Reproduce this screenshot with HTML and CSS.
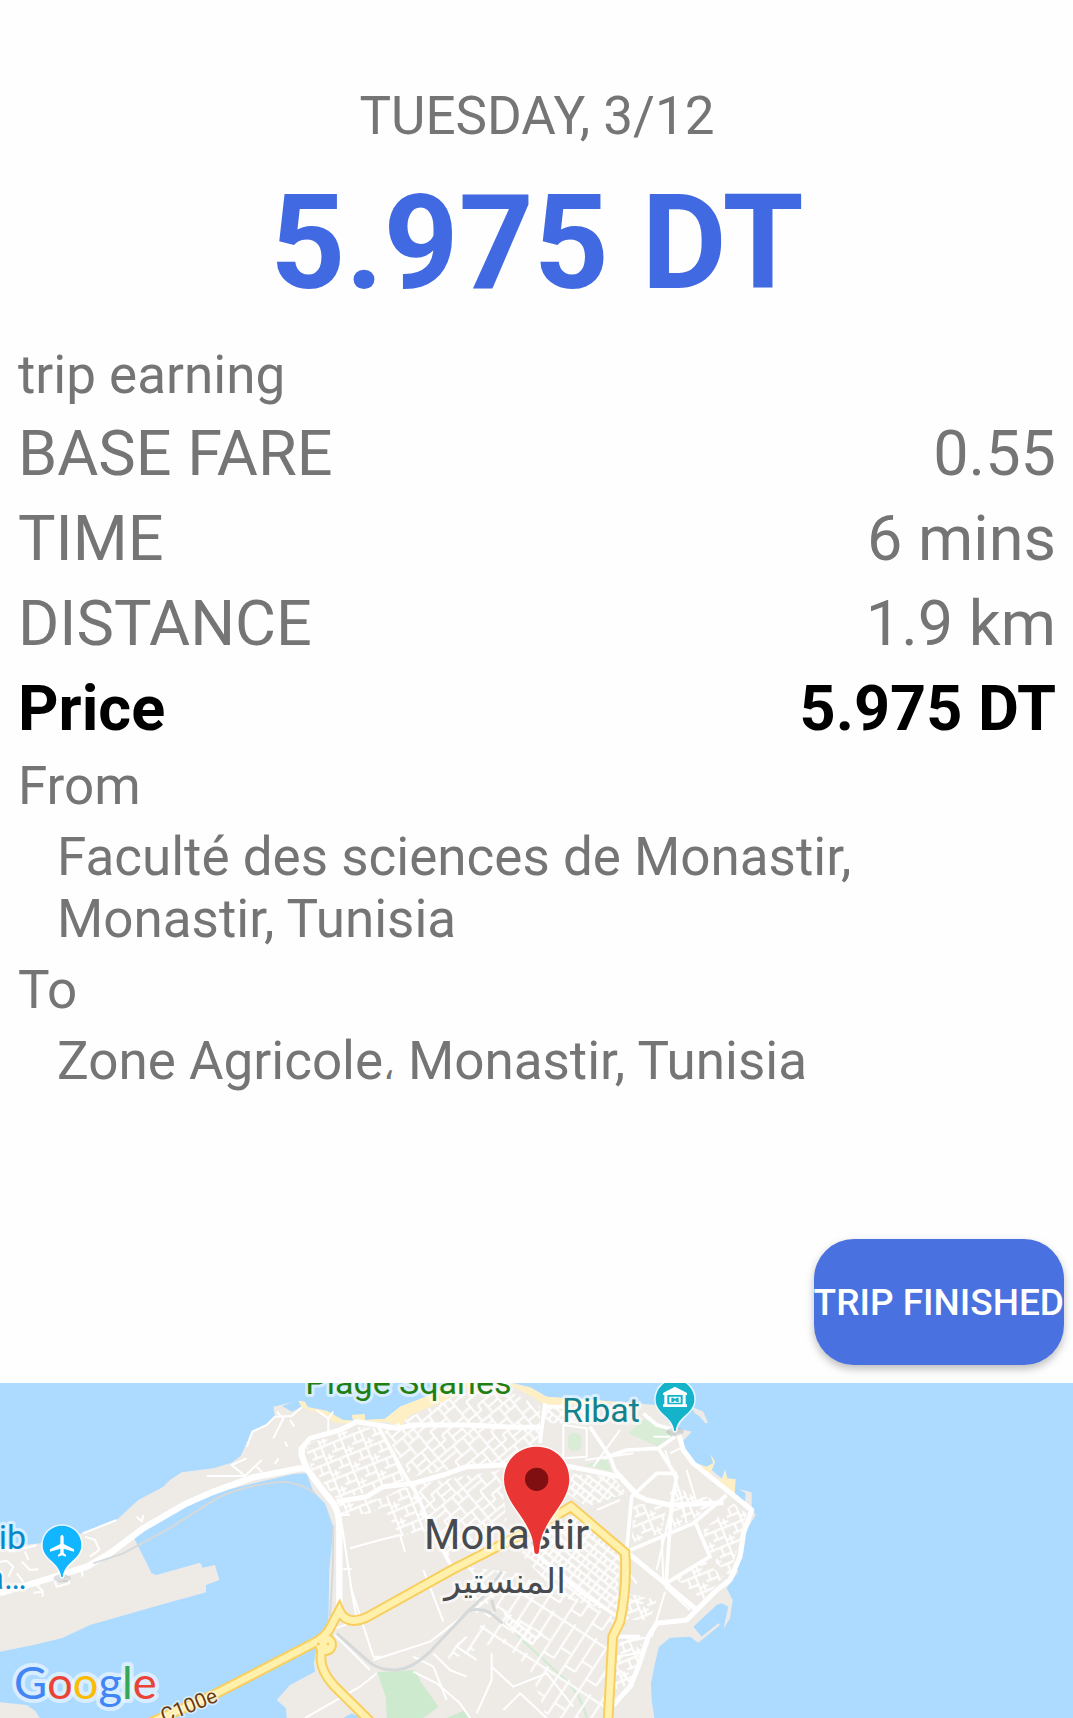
FILE: index.html
```html
<!DOCTYPE html>
<html lang="en">
<head>
<meta charset="utf-8">
<meta name="viewport" content="width=device-width, initial-scale=1">
<title>Trip details</title>
<link rel="stylesheet" href="styles.css">
</head>
<body>
<main class="trip">
  <header class="summary">
    <p class="date">TUESDAY, 3/12</p>
    <h1 class="total">5.975 DT</h1>
  </header>
  <h2 class="caption">trip earning</h2>
  <dl class="fares">
    <div class="fare"><dt>BASE FARE</dt><dd>0.55</dd></div>
    <div class="fare"><dt>TIME</dt><dd>6 mins</dd></div>
    <div class="fare"><dt>DISTANCE</dt><dd>1.9 km</dd></div>
    <div class="fare fare-price"><dt>Price</dt><dd>5.975 DT</dd></div>
  </dl>
  <dl class="route">
    <dt>From</dt>
    <dd>Faculté des sciences de Monastir, Monastir, Tunisia</dd>
    <dt>To</dt>
    <dd>Zone Agricole<span class="arabic-comma">،</span> Monastir, Tunisia</dd>
  </dl>
  <button class="finish" type="button">TRIP FINISHED</button>
</main>
<svg class="map" viewBox="0 39 3219 1005" role="img" aria-label="Map of Monastir">
  <defs>
    <path id="land" d="M0 530L100 522 190 512 245 490 350 450 415 390 490 350 510 330 545 307 640 295 695 278 722 258 740 220 757 185 800 165 825 140 820 110 880 95 846 108 875 125 905 112 905 90 920 110 970 120 1020 150 1060 152 1055 135 1095 133 1095 150 1155 146 1200 110 1290 75 1370 39H1540L1590 52 1640 80 1700 85 1780 90 1965 105 2000 150 2030 175 2075 185 2050 212 2052 235 2080 275 2120 290 2140 280 2132 255 2145 275 2135 300 2165 325 2175 300 2180 325 2205 332 2205 380 2235 395 2237 370 2217 357 2255 367 2255 415 2267 435 2240 480 2230 550 2207 590 2215 605 2180 655 2198 690 2190 745 2170 778 2185 710 2165 700 2150 705 2080 770 2105 800 2155 760 2160 765 2095 818 2070 800 2010 803 1977 830 1965 880 1953 940 1955 990 1963 1044H860L858 1015 830 990 870 945 945 905 942 880 950 830 985 765 988 600 1000 470 975 400 940 365 920 310 880 312 740 345 620 375 540 410 430 465 400 500 455 610 470 615 600 578 608 593 645 585 658 630 618 645V667L480 705 270 765 185 805 100 825 0 845Z"/>
    <clipPath id="on-land"><use href="#land"/></clipPath>
    <pattern id="blocks-a" width="64" height="52" patternUnits="userSpaceOnUse" patternTransform="rotate(-22)">
      <path class="lane" d="M0 4H64M0 30H38M38 4V52M14 4V30M52 30V52M38 42H64"/>
    </pattern>
    <pattern id="blocks-b" width="116" height="140" patternUnits="userSpaceOnUse" patternTransform="rotate(50)">
      <path class="lane" d="M0 4H116M4 0V140M31 4V46M4 46H74M44 46V110M4 25H31M74 4V90M74 30H116M98 30V70M74 70H116M4 84H44M22 84V140M44 110H116M64 110V140M92 90V140M74 90H92"/>
    </pattern>
    <pattern id="blocks-c" width="76" height="150" patternUnits="userSpaceOnUse" patternTransform="rotate(33)">
      <path class="lane" d="M4 0V150M40 0V120M4 10H76M40 82H76M4 120H40"/>
    </pattern>
    <pattern id="blocks-d" width="36" height="40" patternUnits="userSpaceOnUse" patternTransform="rotate(38)">
      <path class="lane" d="M0 4H36M4 0V40M20 4V24M4 24H36"/>
    </pattern>
  </defs>

  <rect class="water" y="39" width="3219" height="1005"/>
  <use class="ground" href="#land"/>
  <path class="ground" d="M0 997L80 1005 105 1022 120 1044H0ZM2075 110L2110 125 2124 158 2116 160 2100 140 2084 130Z"/>
  <path class="water" d="M1030 1044L1055 1030 1085 1044Z"/>

  <g class="sand">
    <path d="M895 92L915 95 925 113 980 122 1030 150 1060 152 1055 135 1095 133 1095 150 1155 146 1200 110 1290 75 1370 39H1420L1330 95 1230 135 1200 170 1160 155 1080 160 1005 158 970 135 905 112Z"/>
    <path d="M1520 39L1590 52 1640 80 1700 85 1780 90 1965 105 1850 98 1640 108 1600 82Z"/>
    <path d="M2085 285L2120 290 2140 280 2132 253 2145 275 2130 312ZM2155 328L2172 325 2175 297 2182 325 2207 328 2203 382Z"/>
  </g>
  <g class="park">
    <path d="M1132 907L1245 900 1262 935 1316 1010 1270 1044H1160L1158 985ZM1340 1044L1395 1020 1410 1044Z"/>
    <path class="park-pale" d="M1885 190L1930 148 1985 168 2025 205 1978 232ZM1755 285L1820 265 1836 305ZM1795 392L1850 375V382Z"/>
    <rect class="park-pale" x="1704" y="188" width="40" height="55" rx="19"/>
  </g>
  <path class="stream" d="M1550 795L1680 915Q1745 970 1760 1044"/>

  <g clip-path="url(#on-land)">
    <path fill="url(#blocks-a)" d="M915 225L1070 170 1135 175 1220 330 1110 365 1010 388 935 300ZM1015 400L1150 385 1210 350 1240 360 1290 480 1200 500 1150 410 1110 430 1015 440Z"/>
    <path fill="url(#blocks-b)" d="M1150 180L1380 70 1520 60 1620 110 1620 270 1400 290 1230 320ZM1240 345L1500 300 1520 450 1340 560ZM1400 590L1560 610 1420 740Z"/>
    <path fill="url(#blocks-d)" d="M1640 110L1760 110 1780 160 1630 160ZM1560 550L1730 430 1860 560 1850 730 1680 680ZM1510 720L1630 790 1600 820 1520 780ZM1690 310L1840 320 1880 370 1760 410 1700 370Z"/>
    <path fill="url(#blocks-c)" d="M1500 600L1660 650 1840 740 1820 1044H1640L1590 900 1500 810 1350 870 1330 850 1440 770Z"/>
    <path fill="url(#blocks-a)" d="M1900 400L2000 410 1985 490 1895 520ZM1880 670L1970 690 1950 750 1870 750ZM1860 800L1930 800 1900 940 1840 960ZM2010 350L2150 390 2080 450 2010 480ZM2110 480L2200 400 2240 430 2190 620 2120 550ZM2020 620L2110 570 2170 620 2110 690Z"/>
  </g>

  <g class="lane">
    <path d="M620 318H735L695 285 740 265M735 318L785 270M770 290L790 310M740 230L757 185 800 165 825 140 875 138 905 112M830 125L850 145 820 205M870 150L883 170M950 120L985 145 1000 125M985 145L985 185M855 215L862 230M835 265L825 282"/>
    <path d="M0 530L40 545 60 530 75 535 110 525M0 575L20 572 40 590 25 620M65 575L90 600 115 598M75 545L85 570M50 610L70 635M100 668L128 665V680M110 645L130 665M248 490L350 450M255 500L285 510 298 540 270 560M410 440L425 455 430 435M245 600L248 620"/>
    <path d="M1020 435H1050M1025 460L1055 660 1120 860 1140 860M1050 535L1140 510 1200 495 1215 545M1030 597H1055M1050 640L1070 745M1005 775L1050 760M1120 870L1290 815 1400 730 1450 670M915 1044L1080 950 1130 910M1240 905L1310 940 1380 1000 1410 1044M1475 850V930L1430 1030M1300 850L1350 900 1400 920M1475 890L1540 950 1640 910 1720 1010M1270 600L1330 755M1240 860L1300 890 1340 990M1400 800L1370 830 1430 870M1510 1020L1560 970 1640 1044M1005 795L1110 900"/>
    <path d="M1690 165L1760 175V260L1690 265ZM1755 270L1900 250M1780 290L1860 180M1995 240L2040 370 2060 460M2010 250L2050 230M1985 490L1990 640M2060 300L2090 400M2010 430L1970 600M1995 665L1955 800M1880 600L1910 640M1850 680L1930 700M1995 650L2070 720M1860 820L1950 800M1850 860L1935 845M1860 900L1900 950M2010 200L1960 200M1780 470L1830 520M1790 420L1860 390"/>
    <path d="M165 633L205 625 208 640 170 650Z"/>
  </g>

  <g class="street">
    <path d="M1135 170L1220 325 1250 370 1295 480 1355 590M1635 100L1620 220M1635 110H1690M1770 170L1830 260 1845 300 1910 370M1810 265L1880 240 1975 235 2025 200M1975 235L2030 320 2015 400 1998 640M2030 310L1970 310 1895 380 1880 540M1880 545L2080 460 2180 375M1998 640L2130 560 2085 455M1600 545L1740 665 1800 705 1850 738M1855 800L1920 800M1930 130L1970 165 2025 180"/>
    <path class="wide" d="M1010 395L1100 380 1150 350 1240 340 1330 315 1400 290 1510 285H1600L1710 290 1860 320 1910 375 1940 390 2010 405 2170 398M905 235L930 205 1020 180 1070 155 1100 160 1190 175 1240 165H1400L1550 172H1620M2035 190L2050 240 2080 280 2180 360 2255 420 2230 490 2220 560 2190 630 2150 660 2060 750 1970 760 1945 800 1915 890 1890 950 1840 1005M1885 550L1995 640 2090 720"/>
    <path class="main-road" d="M0 670L160 622 260 590 330 550 430 475 560 400 640 365 760 322 900 295 920 295 905 255V230M920 295L960 350 1000 400Q1018 430 1018 470V720"/>
  </g>
  <g class="rail">
    <path d="M280 580L370 550 500 480 650 385Q730 345 850 335 905 340 945 370M1000 465L998 600 990 740"/>
    <path class="rail-wide" d="M1010 790L1110 878Q1140 902 1190 900 1240 895 1290 845L1400 728 1450 680 1505 605M1410 722Q1440 712 1470 728L1508 760M1475 690L1485 725"/>
  </g>

  <g class="highway-edge">
    <path id="highway" d="M440 1063L640 975 940 820Q980 800 995 765L1018 722Q1030 750 1060 752 1080 752 1100 742L1355 600 1620 465 1713 410 1875 548Q1882 650 1860 755L1838 800 1824 1054"/>
    <path id="exit" d="M965 822L963 870Q965 905 1000 945L1040 985 1110 1054"/>
    <circle cx="977" cy="824" r="18"/>
  </g>
  <g class="highway-fill">
    <use href="#highway"/><use href="#exit"/><circle cx="977" cy="824" r="18"/>
  </g>
  <path class="island" d="M951 822H959M980 822H987"/>

  <g class="label">
    <text class="beach-label" x="916" y="73">Plage Sqanes</text>
    <text class="museum-label" x="1686" y="156">Ribat</text>
    <text class="airport-label" x="78" y="537">ib</text>
    <text class="airport-label" x="80" y="656">a…</text>
    <text class="city-label" x="1520" y="538">Monastir</text>
    <text class="arabic-label" x="1515" y="668" lang="ar">المنستير</text>
    <text class="road-label" transform="translate(492 1060) rotate(-22)">C100e</text>
    <text class="logo" x="42" y="987"><tspan class="blue">G</tspan><tspan class="red">o</tspan><tspan class="yellow">o</tspan><tspan class="blue">g</tspan><tspan class="green">l</tspan><tspan class="red">e</tspan></text>
  </g>

  <ellipse class="pin-shadow" cx="186" cy="625" rx="26" ry="12"/>
  <path class="pin airport" d="M186 467A58 58 0 0 0 128 525C128 570 177 572 184 621H188C195 572 244 570 244 525A58 58 0 0 0 186 467Z"/>
  <path class="glyph" d="M186 495Q191 495 191 504V522L222 538V545L191 536V549L198 555V560L186 556 174 560V555L181 549V536L150 545V538L181 522V504Q181 495 186 495Z"/>

  <ellipse class="pin-shadow" cx="2025" cy="185" rx="26" ry="12"/>
  <path class="pin museum" d="M2025 30A58 58 0 0 0 1967 88C1967 133 2016 135 2023 183H2027C2034 135 2083 133 2083 88A58 58 0 0 0 2025 30Z"/>
  <path class="glyph" fill-rule="evenodd" d="M2025 50L2061 69V75H2057V103H2061V111H1989V103H1993V75H1989V69ZM2002 75V103H2048V75ZM2008 80H2042V98H2008ZM2014 83V96H2020L2025 91 2030 96H2036V83H2030L2025 87 2020 83Z"/>

  <path class="pin destination" d="M1610 230C1552 230 1512 275 1512 328C1512 362 1530 393 1556 429C1588 475 1600 501 1603 545Q1603 552 1610 552 1617 552 1617 545C1620 501 1632 475 1664 429C1690 393 1708 362 1708 328C1708 275 1668 230 1610 230Z"/>
  <circle class="pin-dot" cx="1610" cy="328" r="35"/>
</svg>
</body>
</html>
```
FILE: styles.css
```css
* {
  box-sizing: border-box;
}

body {
  margin: 0;
  min-height: 100vh;
  display: flex;
  flex-direction: column;
  background: #fefefe;
  color: #757575;
  font: 53px/62px Roboto, "DejaVu Sans", sans-serif;
}

p, h1, h2, dl, dd {
  margin: 0;
}

.trip {
  flex: 1;
  display: flex;
  flex-direction: column;
  padding: 85px 17px 18px 18px;
}

.summary {
  display: flex;
  flex-direction: column;
  gap: 19px;
  margin-bottom: 24px;
  text-align: center;
}

.total {
  font-size: 131px;
  line-height: 154px;
  font-weight: 700;
  color: #4169e1;
}

.caption {
  font-size: 53px;
  font-weight: 400;
}

.fares {
  display: grid;
  gap: 11px;
  margin: 11px 0 9px;
  font-size: 63px;
  line-height: 74px;
}

.fare {
  display: flex;
  justify-content: space-between;
}

.fare-price {
  color: #000;
  font-weight: 700;
}

.route {
  display: grid;
  gap: 9px;
}

.route dd {
  padding: 0 39px;
}

.arabic-comma {
  font: 36px/1 "DejaVu Sans", sans-serif;
}

.finish {
  align-self: flex-end;
  margin-top: auto;
  margin-right: -8px;
  min-height: 126px;
  padding: 2px 0 0;
  border: 0;
  border-radius: 40px;
  background: #4a71e0;
  color: #fff;
  font: 500 37px/44px Roboto, sans-serif;
  box-shadow: 0 4px 8px rgba(0, 0, 0, 0.26);
  cursor: pointer;
}

.map {
  display: block;
  width: 100%;
  height: auto;
}

.water { fill: #addaff; }
.ground { fill: #eeebe7; }
.sand { fill: #fef0c4; }
.park { fill: #ceeace; }
.park-pale { fill: #d8ecd6; }
.stream { fill: none; stroke: #d3ebd3; stroke-width: 7; }

.lane, .street {
  fill: none;
  stroke: #fff;
  stroke-width: 6;
  stroke-linejoin: round;
}

.street { stroke-width: 11; }
.wide { stroke-width: 15; }
.main-road { stroke-width: 19; }

.rail {
  fill: none;
  stroke: #d5d9da;
  stroke-width: 6;
}

.rail-wide { stroke-width: 9; }

.highway-edge {
  fill: #f8cf5f;
  stroke: #f8cf5f;
  stroke-width: 32;
}

.highway-fill {
  fill: #fff1ac;
  stroke: #fff1ac;
  stroke-width: 20;
}

.highway-edge path, .highway-fill use {
  fill: none;
}

.island { stroke: #f8cf5f; stroke-width: 7; }

.label {
  font-family: Roboto, sans-serif;
  font-size: 102px;
  paint-order: stroke;
  stroke: rgba(255, 255, 255, 0.55);
  stroke-width: 18;
  stroke-linejoin: round;
}

.beach-label { fill: #1e8012; }
.museum-label { fill: #12828f; }
.airport-label { fill: #078acb; text-anchor: end; }

.city-label, .arabic-label {
  fill: #474b4f;
  font-size: 125px;
  text-anchor: middle;
}

.arabic-label {
  font-family: "DejaVu Sans", sans-serif;
  font-size: 104px;
}

.road-label { fill: #6b3c10; font-size: 62px; stroke-width: 10; }

.logo {
  font-family: Lato, sans-serif;
  font-size: 136px;
  stroke-width: 24;
}

.blue { fill: #4285f4; }
.red { fill: #ea4335; }
.yellow { fill: #fbbc05; }
.green { fill: #34a853; }

.pin {
  paint-order: stroke;
  stroke: rgba(255, 255, 255, 0.75);
  stroke-width: 9;
}

.airport { fill: #12b5ff; }
.museum { fill: #15b3c9; }
.destination { fill: #ea3535; }
.pin-dot { fill: #7f0f10; }
.pin-shadow { fill: rgba(120, 130, 140, 0.25); }
.glyph { fill: #fff; }
```
